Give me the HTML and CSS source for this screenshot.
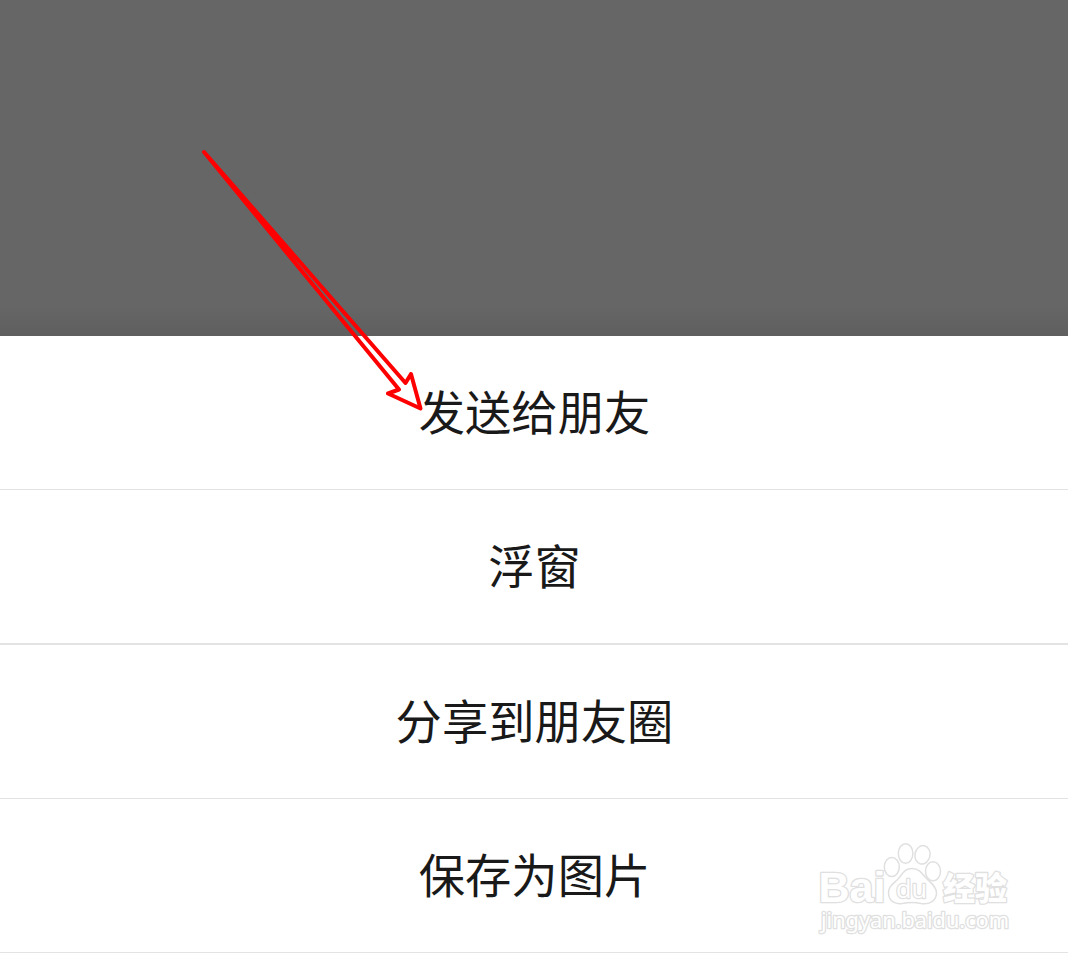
FILE: index.html
```html
<!DOCTYPE html>
<html lang="zh-CN">
<head>
    <meta charset="UTF-8">
    <title>分享</title>
    <meta name="viewport" content="width=device-width, initial-scale=1">
    <link rel="stylesheet" href="styles.css">
</head>
<body>
<div class="backdrop"></div>

<ul class="sheet">
    <li class="item">发送给朋友</li>
    <li class="item thick">浮窗</li>
    <li class="item">分享到朋友圈</li>
    <li class="item">保存为图片</li>
</ul>

<svg class="arrow" width="240" height="280" viewBox="190 140 240 280">
    <path d="M204 152 L399 389.5 L388 393.5 L420.5 408.5 L411 374 L405.5 383 Z"/>
</svg>

<svg class="watermark" width="208" height="108" viewBox="810 835 208 108">
    <text class="brand" x="818.5" y="902" textLength="67" lengthAdjust="spacingAndGlyphs">Bai</text>
    <ellipse cx="891.8" cy="867" rx="7.5" ry="9.5"/>
    <ellipse cx="905.6" cy="853.5" rx="7.3" ry="9.8"/>
    <ellipse cx="922.5" cy="854.8" rx="7.5" ry="9.3" transform="rotate(12 922.5 854.8)"/>
    <ellipse cx="933" cy="871.2" rx="7.5" ry="9.5"/>
    <path d="M912 868.5 C904 868.5 902 875 898 879 C893 884 888 887 888.5 893.5 C889 901 895 904.5 902 903.5 C909 902 915 902 921 903.5 C929 905 936 901 936.5 893.5 C937 887 931 883 927 879 C923 875 920 868.5 912 868.5 Z"/>
    <text class="du" x="896" y="898" textLength="31" lengthAdjust="spacingAndGlyphs">du</text>
    <text class="cn" x="943" y="899.5" textLength="64" lengthAdjust="spacingAndGlyphs">经验</text>
    <text class="url" x="821" y="928" textLength="188" lengthAdjust="spacingAndGlyphs">jingyan.baidu.com</text>
</svg>
</body>
</html>
```
FILE: styles.css
```css
body {
    margin: 0;
    height: 958px;
    position: relative;
    overflow: hidden;
    background: #fff;
    font-family: "Noto Sans CJK SC", sans-serif;
}

.backdrop {
    height: 336px;
    background: linear-gradient(#666 0, #666 305px, #5f5f5f 336px);
}

.sheet {
    margin: 0;
    padding: 0;
    list-style: none;
}

.item {
    height: 153px;
    line-height: 147px;
    border-bottom: 1px solid #e3e3e3;
    text-align: center;
    text-indent: 1px;
    font-size: 46.3px;
    color: #191919;
}

.item.thick {
    border-bottom-width: 2px;
}

.arrow {
    position: absolute;
    left: 190px;
    top: 140px;
    fill: none;
    stroke: #f00;
    stroke-width: 4;
    stroke-linejoin: round;
}

.watermark {
    position: absolute;
    left: 810px;
    top: 835px;
    fill: #fff;
    stroke: #e0e0e0;
    stroke-width: 1.5;
    stroke-linejoin: round;
}

.watermark text {
    paint-order: stroke;
    stroke-width: 2.6;
}

.brand {
    font: bold 42px "Liberation Sans", sans-serif;
}

.watermark .du {
    font: 25px "Open Sans", sans-serif;
    stroke-width: 2.4;
}

.cn {
    font: 900 32px "Noto Sans CJK SC", sans-serif;
}

.url {
    font: 21px "Noto Sans", sans-serif;
}
```
